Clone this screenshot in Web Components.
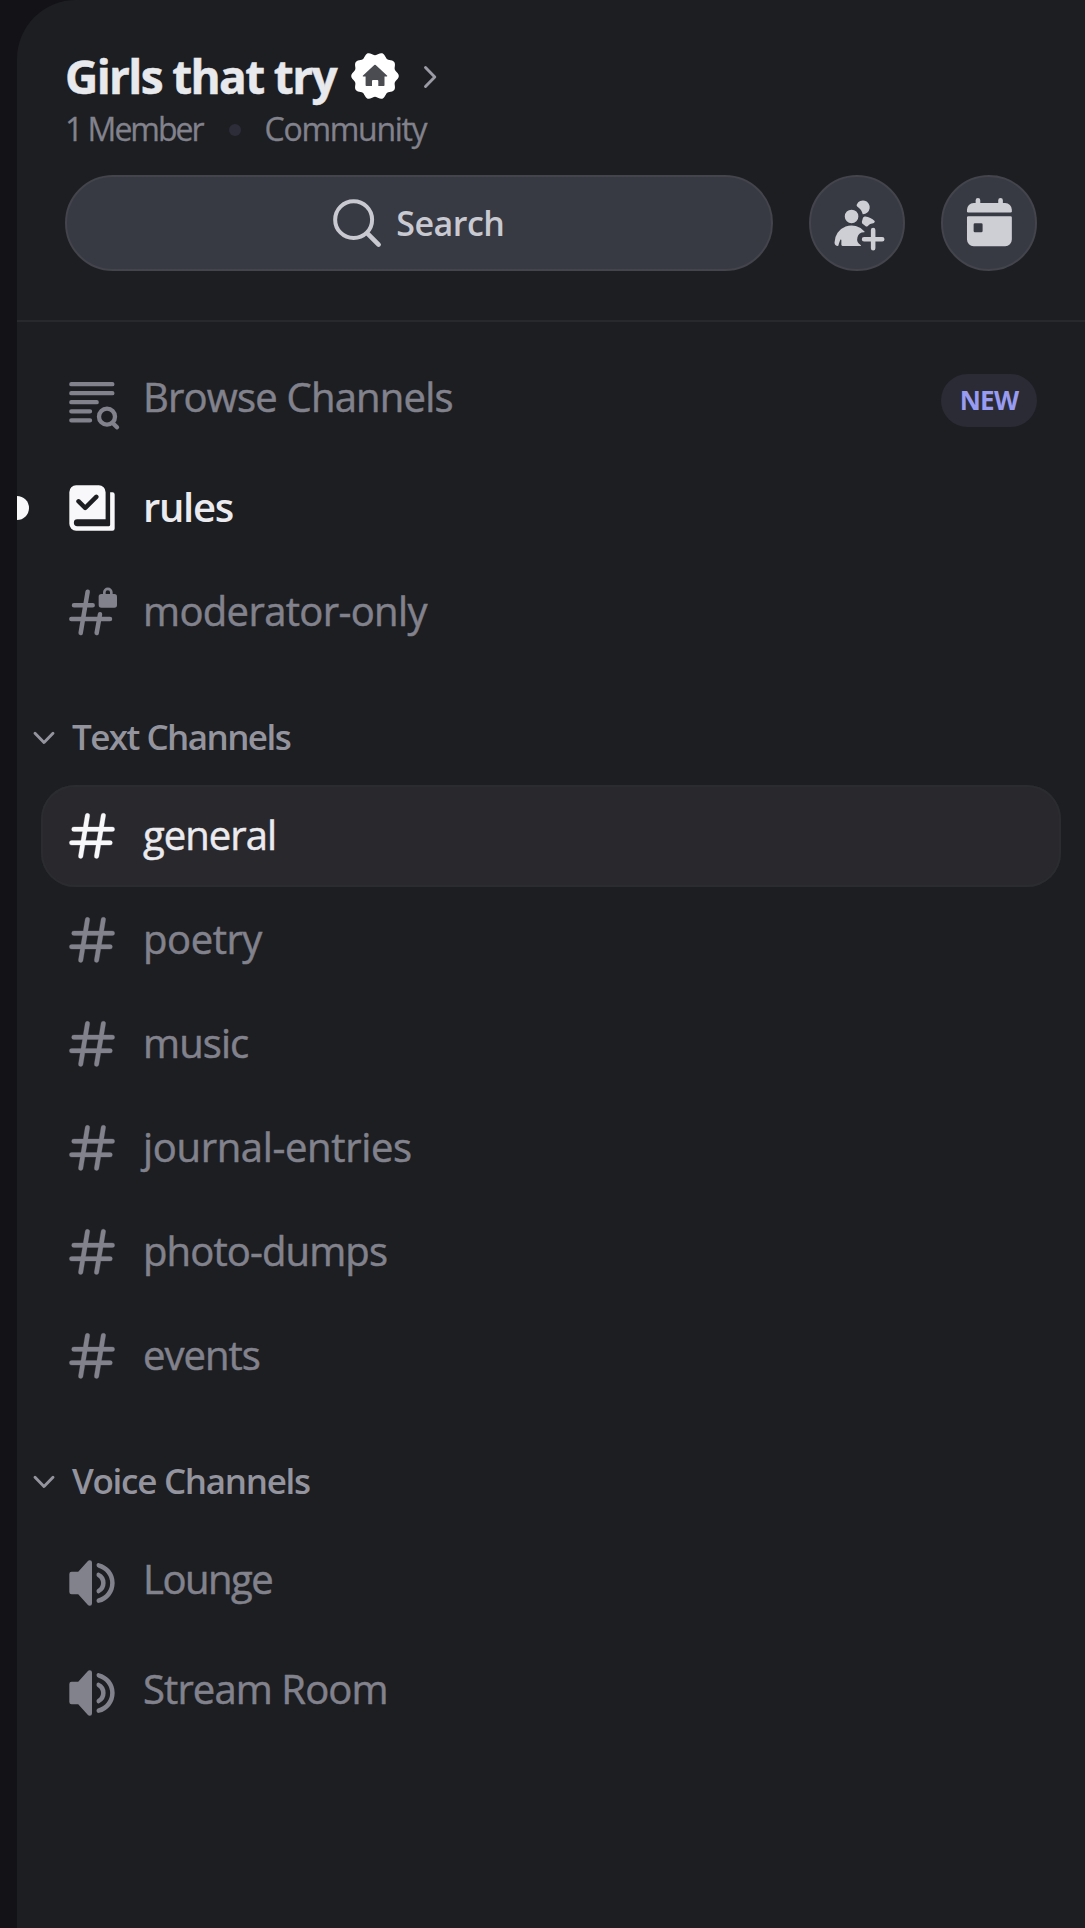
<!DOCTYPE html>
<html lang="en">
<head>
<meta charset="utf-8">
<title>Girls that try</title>
<style>
  html, body { margin: 0; height: 100%; background: #131217; }
  body { font-family: "Open Sans", "Noto Sans", sans-serif; color: #82828d; overflow: hidden; }
</style>
</head>
<body>
<server-sidebar>
  <server-header slot="header">
    <fit-text slot="name" ls="-1.65">Girls that try</fit-text>
    <fit-text slot="members" ls="-2">1 Member</fit-text>
    <fit-text slot="kind" ls="-1.3">Community</fit-text>
  </server-header>
  <channel-row icon="browse" size="tall"><fit-text ls="-0.8">Browse Channels</fit-text><new-badge slot="end">NEW</new-badge></channel-row>
  <channel-row icon="rules" state="unread"><fit-text ls="-1.3">rules</fit-text></channel-row>
  <channel-row icon="lock"><fit-text ls="-0.65">moderator-only</fit-text></channel-row>
  <channel-category><fit-text ls="-1.55">Text Channels</fit-text></channel-category>
  <channel-row icon="hash" state="active"><fit-text ls="-0.95">general</fit-text></channel-row>
  <channel-row icon="hash"><fit-text ls="-0.45">poetry</fit-text></channel-row>
  <channel-row icon="hash"><fit-text ls="-0.9">music</fit-text></channel-row>
  <channel-row icon="hash"><fit-text ls="-0.35">journal-entries</fit-text></channel-row>
  <channel-row icon="hash"><fit-text ls="-0.88">photo-dumps</fit-text></channel-row>
  <channel-row icon="hash"><fit-text ls="-1">events</fit-text></channel-row>
  <channel-category><fit-text ls="-1.28">Voice Channels</fit-text></channel-category>
  <channel-row icon="voice" size="tall"><fit-text ls="-1.5">Lounge</fit-text></channel-row>
  <channel-row icon="voice" size="tall"><fit-text ls="-0.9">Stream Room</fit-text></channel-row>
</server-sidebar>
<script>
// Scalloped ten-lobe outline for the community badge
const scallop = Array.from({ length: 120 }, (_, i) => {
  const a = i * Math.PI / 60, r = 22.3 + 1.5 * Math.cos(10 * a);
  return (25 + r * Math.cos(a)).toFixed(2) + ',' + (25 + r * Math.sin(a)).toFixed(2);
}).join(' ');

const ICONS = {
  hash: ['-.35 -.35 24.7 24.7', '<path stroke="currentColor" stroke-width=".12" fill-rule="evenodd" d="M10.99 3.16A1 1 0 1 0 9 2.84L8.15 8H4a1 1 0 0 0 0 2h3.82l-.67 4H3a1 1 0 1 0 0 2h3.82l-.8 4.84a1 1 0 0 0 1.97.32L8.85 16h4.97l-.8 4.84a1 1 0 0 0 1.97.32l.86-5.16H20a1 1 0 1 0 0-2h-3.82l.67-4H21a1 1 0 1 0 0-2h-3.82l.8-4.84a1 1 0 1 0-1.97-.32L15.15 8h-4.97l.8-4.84ZM14.15 14l.67-4H9.85l-.67 4h4.97Z"/>'],
  lock: ['192 372 168 168', '<g fill="none" stroke="currentColor" stroke-width="13.500" stroke-linecap="round"><path d="M263 395 242 519M300 463 290 519M222 436H278M214 477H330"/><path d="M313 406V397a10.500 10.500 0 0 1 21 0V406" stroke-width="8"/></g><rect x="296" y="402" width="55" height="41" rx="8"/>'],
  rules: ['-.35 -.35 24.7 24.7', '<path fill-rule="evenodd" d="M15 2a3 3 0 0 1 3 3v12H5.500a1.500 1.500 0 0 0 0 3h14a.5.5 0 0 0 .5-.5V5h1a1 1 0 0 1 1 1v15a1 1 0 0 1-1 1H5a3 3 0 0 1-3-3V5a3 3 0 0 1 3-3h10Zm-.3 5.700a1 1 0 0 0-1.400-1.400L9 10.580l-2.300-2.300a1 1 0 0 0-1.400 1.420l3 3a1 1 0 0 0 1.400 0l5-5Z"/>'],
  browse: ['192 69 168 168', '<g fill="none" stroke="currentColor" stroke-width="13" stroke-linecap="round"><path d="M214 99.500H337M214 126.500H337M214 153.500H290M214 181H270M214 208H270"/><circle cx="321" cy="197" r="24"/><path d="m341 219 10 10"/></g>'],
  voice: ['-.35 -.35 24.7 24.7', '<path d="M12 3a1 1 0 0 0-1-1h-.06a1 1 0 0 0-.74.32L5.920 7H3a1 1 0 0 0-1 1v8a1 1 0 0 0 1 1h2.920l4.280 4.680a1 1 0 0 0 .74.32H11a1 1 0 0 0 1-1V3ZM15.100 20.750c-.58.14-1.100-.33-1.100-.92v-.03c0-.5.37-.92.85-1.050a7 7 0 0 0 0-13.500A1.110 1.110 0 0 1 14 4.200v-.03c0-.6.52-1.060 1.100-.92a9 9 0 0 1 0 17.500Z"/><path d="M15.160 16.510c-.57.28-1.160-.2-1.160-.83v-.14c0-.43.28-.8.63-1.020a3 3 0 0 0 0-5.040c-.35-.23-.63-.6-.63-1.020v-.14c0-.63.59-1.100 1.160-.83a5 5 0 0 1 0 9.020Z"/>'],
  search: ['29 105 164 164', '<g fill="none" stroke="currentColor" stroke-linecap="round"><circle cx="100" cy="176" r="55.500" stroke-width="12"/><path d="M142 218 175 251" stroke-width="14"/></g>'],
  invite: ['0 0 24 24', '<path d="M14.500 8a3 3 0 1 0-2.700-4.300c-.2.4.06.86.44 1.120a5 5 0 0 1 2.140 3.080c.01.06.06.1.12.1ZM16.620 13.170c-.22.29-.65.37-.92.14-.34-.3-.7-.57-1.090-.82-.52-.33-.7-1.050-.47-1.630.11-.27.2-.57.26-.87.11-.54.55-1 1.100-.92 1.600.2 3.040.92 4.150 1.980.3.27-.25.95-.65.95a3 3 0 0 0-2.380 1.170ZM15.190 15.610c.13.16.02.39-.19.39a3 3 0 0 0-1.520 5.590c.2.12.26.41.02.41h-8a.5.5 0 0 1-.5-.5v-2.100c0-.25-.31-.33-.42-.1-.32.67-.67 1.580-.88 2.540a.2.2 0 0 1-.2.16A1.500 1.500 0 0 1 2 20.500a7.500 7.500 0 0 1 13.190-4.890ZM9.500 12a3 3 0 1 0 0-6 3 3 0 0 0 0 6Z"/><path d="M19 14a1 1 0 0 1 1 1v3h3a1 1 0 0 1 0 2h-3v3a1 1 0 0 1-2 0v-3h-3a1 1 0 0 1 0-2h3v-3a1 1 0 0 1 1-1Z"/>'],
  calendar: ['545 107 164 164', '<path d="M586 130V120a7 7 0 0 1 14 0V130ZM654 130V120a7 7 0 0 1 14 0V130Z"/><path d="M580 128H675A20 20 0 0 1 695 148V153A4 4 0 0 1 691 157H564A4 4 0 0 1 560 153V148A20 20 0 0 1 580 128Z"/><path fill-rule="evenodd" d="M564 168H691A4 4 0 0 1 695 172V238A20 20 0 0 1 675 258H580A20 20 0 0 1 560 238V172A4 4 0 0 1 564 168ZM584 189A4 4 0 0 0 580 193V212A4 4 0 0 0 584 216H603A4 4 0 0 0 607 212V193A4 4 0 0 0 603 189Z"/>'],
  badge: ['0 0 50 50', `<polygon fill="#fff" points="${scallop}"/><path fill="#4b4c52" d="M24.300 14.100a1 1 0 0 1 1.400 0L37 24.500c.5.5.2 1-.4 1H34.500V34.300a.7.7 0 0 1-.7.7H28.300V30a1 1 0 0 0-1-1H23a1 1 0 0 0-1 1V35H16.300a.7.7 0 0 1-.7-.7V25.500H13.400c-.6 0-.9-.5-.4-1Z"/>`],
  right: ['0 0 20 28', '<path d="m4.500 4.500 9.300 9.500-9.300 9.500" fill="none" stroke="currentColor" stroke-width="2.900" stroke-linecap="round" stroke-linejoin="round"/>'],
  down: ['0 0 24 16', '<path d="m3 3.200 9 9.300 9-9.300" fill="none" stroke="currentColor" stroke-width="2.900" stroke-linecap="round" stroke-linejoin="round"/>']
};

function define(name, html, setup) {
  const template = document.createElement('template');
  template.innerHTML = html;
  customElements.define(name, class extends HTMLElement {
    constructor() {
      super();
      this.attachShadow({ mode: 'open' }).append(template.content.cloneNode(true));
    }
    connectedCallback() { if (setup) setup(this, this.shadowRoot); }
  });
}

// Puts the icon named by the host's "icon" attribute in the reserved place
const placeIcon = (el, root) => {
  const icon = document.createElement('ui-icon');
  icon.setAttribute('name', el.getAttribute('icon'));
  root.querySelector('.icon').replaceWith(icon);
};

define('ui-icon', `<style>:host{display:block;flex:none;width:56px;height:56px}svg{display:block;width:100%;height:100%;overflow:visible}</style><svg fill="currentColor" aria-hidden="true"></svg>`,
  (el, root) => {
    const [box, body] = ICONS[el.getAttribute('name')];
    const svg = root.querySelector('svg');
    svg.setAttribute('viewBox', box);
    svg.innerHTML = body;
  });

define('fit-text', `<style>:host{display:block;white-space:nowrap;-webkit-text-stroke:var(--ink,.5px) currentColor}</style><slot></slot>`,
  el => { el.style.letterSpacing = (el.getAttribute('ls') || 0) + 'px'; });

define('new-badge', `<style>:host{display:flex;align-items:center;justify-content:center;width:96px;height:53px;margin-bottom:2px;border-radius:27px;background:#2b2b35;color:#989bf0;font-size:26px;font-weight:700;line-height:53px;letter-spacing:-.8px}</style><slot></slot>`);

define('round-button', `<style>:host{display:flex;align-items:center;justify-content:center;box-sizing:border-box;width:96px;height:96px;border-radius:50%;background:#383a43;border:2px solid #43444c;color:#ceced5}ui-icon{width:54.500px;height:54.500px}</style><span class="icon"></span>`, placeIcon);

define('search-button', `<style>:host{display:flex;align-items:center;justify-content:center;flex:1;box-sizing:border-box;height:96px;border-radius:48px;background:#383a43;border:2px solid #43444c;color:#c8c9d1;font-size:34px;font-weight:600;line-height:50px;--ink:0px}ui-icon{width:54.600px;height:54.600px}fit-text{margin:0 4px 0 12px}</style><ui-icon name="search"></ui-icon><fit-text ls="-0.5">Search</fit-text>`);

define('server-header', `<style>
:host{display:block;padding:50px 48px 49px;border-bottom:2px solid #28292d}
.name{display:flex;align-items:center;height:50px;color:#e8e9ed;font-size:46px;font-weight:700;line-height:50px}
slot[name=name]{display:block;padding-top:2px}
.name ui-icon[name=badge]{width:50px;height:50px;margin:2px 0 0 14px}
.name ui-icon[name=right]{width:20px;height:28px;margin:3px 0 0 21px;color:#9b9ba5}
.meta{display:flex;align-items:center;height:36px;margin-top:11px;font-size:32px;line-height:36px;--ink:.3px}
.dot{width:12px;height:12px;margin:1px 24px 0 26px;border-radius:50%;background:#2d2d39}
.actions{display:flex;gap:36px;margin-top:28px}
</style>
<div class="name"><slot name="name"></slot><ui-icon name="badge"></ui-icon><ui-icon name="right"></ui-icon></div>
<div class="meta"><slot name="members"></slot><span class="dot"></span><slot name="kind"></slot></div>
<div class="actions"><search-button></search-button><round-button icon="invite"></round-button><round-button icon="calendar"></round-button></div>`);

define('channel-row', `<style>
:host{display:flex;align-items:center;box-sizing:border-box;position:relative;height:102px;margin:0 24px;padding:0 24px 0 23px;border-radius:34px;font-size:40px;line-height:54px;color:#82828d}
:host([size=tall]){height:108px}
:host([state=active]){background:#28282d;box-shadow:inset 0 0 0 2px #2b2c30;color:#ebebef}
:host([state=unread]){color:#ebebef;font-weight:600;--ink:0px}
.label{flex:1;margin-left:23px;padding-bottom:2px}
:host([size=tall]) .label{padding-bottom:9px}
:host([state=active]) ui-icon,:host([state=unread]) ui-icon{color:#f8f8fa}
:host([icon=browse]) ui-icon{margin-top:2px}
.pip{display:none;position:absolute;left:-24px;top:39px;width:12px;height:24px;border-radius:0 12px 12px 0;background:#f8f8fa}
:host([state=unread]) .pip{display:block}
</style><span class="pip"></span><span class="icon"></span><div class="label"><slot></slot></div><slot name="end"></slot>`, placeIcon);

define('channel-category', `<style>:host{display:flex;align-items:center;box-sizing:border-box;height:118px;padding:26px 0 0 15px;font-size:35px;font-weight:600;line-height:48px;color:#94949e;--ink:0px}ui-icon{width:24px;height:16px;margin:1px 16px 0 0}</style><ui-icon name="down"></ui-icon><slot></slot>`);

define('server-sidebar', `<style>
:host{display:flex;height:100vh;padding-left:17px;box-sizing:border-box}
.panel{flex:1;background:#1d1e22;border-top-left-radius:59px}
.list{display:flex;flex-direction:column;gap:2px;padding-top:25px}
</style><div class="panel"><slot name="header"></slot><div class="list"><slot></slot></div></div>`);
</script>
</body>
</html>
